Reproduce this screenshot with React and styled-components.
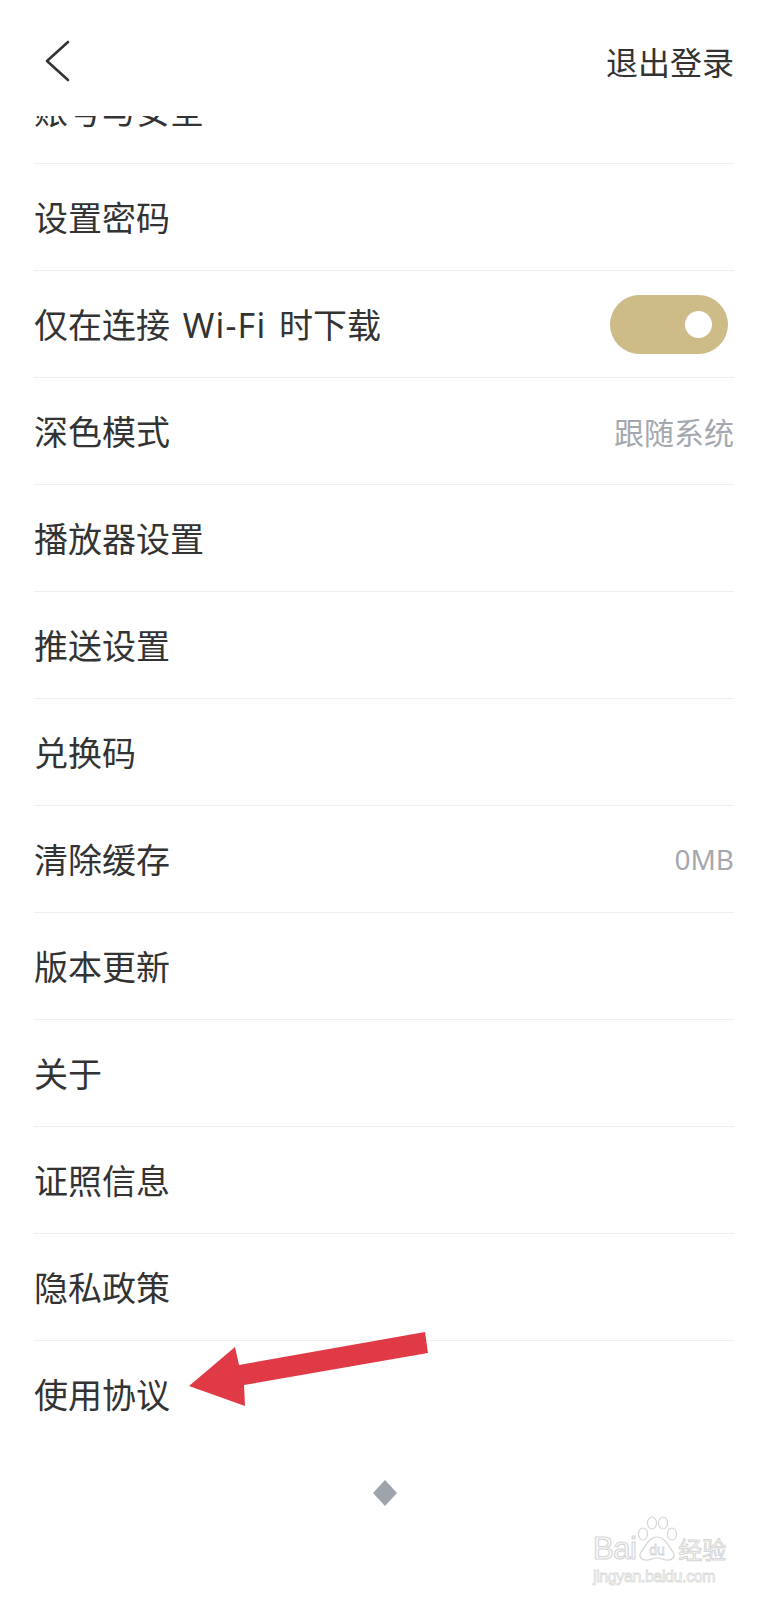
import React from 'react';
import styled, { createGlobalStyle } from 'styled-components';

const GlobalStyle = createGlobalStyle`
  html, body { margin: 0; padding: 0; background: #fff; }
  body { font-family: "Noto Sans CJK SC", "Noto Sans", sans-serif; color: #333; }
  * { box-sizing: border-box; }
`;

const Page = styled.div`
  position: relative;
  width: 769px;
  height: 1600px;
  overflow: hidden;
  background: #fff;
  display: flex;
  flex-direction: column;
`;

const Header = styled.header`
  flex: none;
  height: 116px;
  display: flex;
  align-items: center;
  justify-content: space-between;
  padding: 6px 35px 0 42px;
  background: #fff;
`;

const BackButton = styled.button`
  border: 0;
  background: none;
  padding: 0;
  width: 30px;
  height: 44px;
  display: flex;
  cursor: pointer;
`;

const HeaderAction = styled.span`
  font-size: 32px;
  line-height: 44px;
  color: #333;
`;

const Viewport = styled.main`
  flex: 1;
  overflow: hidden;
`;

const List = styled.div`
  margin-top: -59px;
`;

const Row = styled.div`
  height: 107px;
  margin: 0 35px 0 34px;
  display: flex;
  align-items: center;
  justify-content: space-between;
  border-bottom: ${(p) => (p.$last ? '1px solid transparent' : '1px solid #efefef')};
`;

const Label = styled.span`
  font-size: 34px;
  line-height: 1;
  color: #333;
`;

const Latin = styled.span`
  font-family: "Noto Sans", sans-serif;
  margin: 0 5px;
  letter-spacing: 1.2px;
`;

const Value = styled.span`
  font-family: ${(p) => (p.$latin ? '"Noto Sans", sans-serif' : '"Noto Sans CJK SC", sans-serif')};
  font-size: ${(p) => (p.$latin ? '28px' : '30px')};
  line-height: 1;
  color: #a4a8ae;
`;

const Toggle = styled.div`
  width: 118px;
  height: 59px;
  margin-right: 6px;
  border-radius: 30px;
  background: #cdbb88;
  display: flex;
  align-items: center;
  justify-content: flex-end;
  padding-right: 16px;
`;

const Knob = styled.span`
  width: 27px;
  height: 27px;
  border-radius: 50%;
  background: #fff;
`;

const Footer = styled.div`
  display: flex;
  justify-content: center;
  padding-top: 32px;
`;

const ArrowOverlay = styled.svg`
  position: absolute;
  left: 180px;
  top: 1320px;
  width: 260px;
  height: 100px;
  pointer-events: none;
`;

const Watermark = styled.div`
  position: absolute;
  left: 593px;
  top: 1516px;
  display: flex;
  flex-direction: column;
  align-items: flex-start;
  pointer-events: none;
`;

const WmTop = styled.div`
  display: flex;
  align-items: flex-end;
`;

const WmBai = styled.span`
  font-family: "Liberation Sans", Arial, sans-serif;
  font-size: 31px;
  line-height: 26px;
  color: #fff;
  -webkit-text-stroke: 1.2px #d6d6d6;
  letter-spacing: -0.5px;
`;

const WmJy = styled.span`
  font-family: "Noto Sans CJK SC", sans-serif;
  font-size: 24px;
  line-height: 26px;
  color: #fff;
  -webkit-text-stroke: 1px #d6d6d6;
`;

const WmUrl = styled.span`
  margin-top: 6px;
  font-family: "Liberation Sans", Arial, sans-serif;
  font-size: 16px;
  line-height: 18px;
  color: #fff;
  -webkit-text-stroke: 0.8px #dadada;
  letter-spacing: -0.4px;
`;

const rows = [
  { label: '账号与安全' },
  { label: '设置密码' },
  { label: ['仅在连接', 'Wi-Fi', '时下载'], toggle: true },
  { label: '深色模式', value: '跟随系统' },
  { label: '播放器设置' },
  { label: '推送设置' },
  { label: '兑换码' },
  { label: '清除缓存', value: '0MB', latin: true },
  { label: '版本更新' },
  { label: '关于' },
  { label: '证照信息' },
  { label: '隐私政策' },
  { label: '使用协议' },
];

function Paw() {
  return (
    <svg width="42" height="46" viewBox="0 0 42 46" fill="#fff" stroke="#d6d6d6" strokeWidth="1.2">
      <ellipse cx="7" cy="18" rx="4.5" ry="6" />
      <ellipse cx="16" cy="7" rx="4.5" ry="6" />
      <ellipse cx="27" cy="7" rx="4.5" ry="6" />
      <ellipse cx="36" cy="18" rx="4.5" ry="6" />
      <path d="M21 21 C13 21 9 31 5 36 C2 41 6 45 12 44 C16 43 18 42 21 42 C24 42 26 43 30 44 C36 45 40 41 37 36 C33 31 29 21 21 21 Z" />
      <text x="21" y="39" textAnchor="middle" fontFamily="Liberation Sans, Arial, sans-serif" fontSize="14" fill="#fff" stroke="#d6d6d6" strokeWidth="0.8">du</text>
    </svg>
  );
}

function RowLabel({ label }) {
  if (Array.isArray(label)) {
    return (
      <Label>
        {label[0]} <Latin>{label[1]}</Latin> {label[2]}
      </Label>
    );
  }
  return <Label>{label}</Label>;
}

export default function App() {
  return (
    <>
      <GlobalStyle />
      <Page>
        <Header>
          <BackButton aria-label="返回">
            <svg width="30" height="44" viewBox="0 0 30 44" fill="none" stroke="#333" strokeWidth="2.6" strokeLinecap="round" strokeLinejoin="round">
              <path d="M26 3 L5 22 L26 41" />
            </svg>
          </BackButton>
          <HeaderAction>退出登录</HeaderAction>
        </Header>
        <Viewport>
          <List>
            {rows.map((r, i) => (
              <Row key={i} $last={i === rows.length - 1}>
                <RowLabel label={r.label} />
                {r.toggle && (
                  <Toggle>
                    <Knob />
                  </Toggle>
                )}
                {r.value && <Value $latin={r.latin}>{r.value}</Value>}
              </Row>
            ))}
            <Footer>
              <svg width="24" height="26" viewBox="0 0 24 26">
                <polygon points="12,0 24,13 12,26 0,13" fill="#9ea4ab" />
              </svg>
            </Footer>
          </List>
        </Viewport>
        <ArrowOverlay viewBox="0 0 260 100">
          <polygon points="9,66 55,27 59,45 245,12 248,33 64,65 65,86" fill="#e13a47" />
        </ArrowOverlay>
        <Watermark>
          <WmTop>
            <WmBai>Bai</WmBai>
            <Paw />
            <WmJy>经验</WmJy>
          </WmTop>
          <WmUrl>jingyan.baidu.com</WmUrl>
        </Watermark>
      </Page>
    </>
  );
}
